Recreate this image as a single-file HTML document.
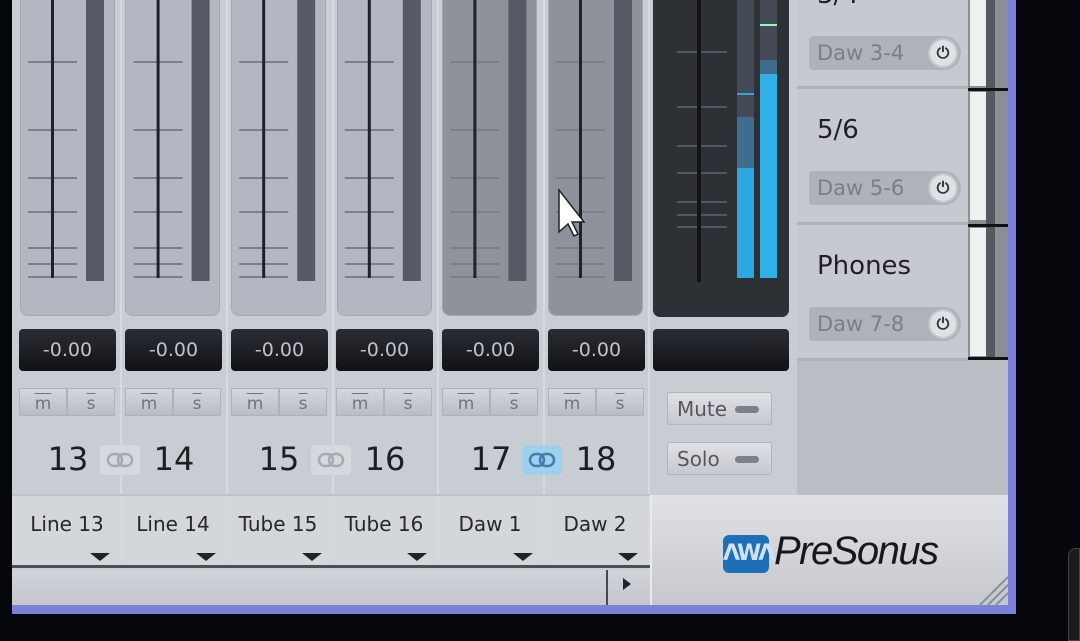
<!DOCTYPE html>
<html><head><meta charset="utf-8"><style>
*{margin:0;padding:0;box-sizing:border-box}
body{width:1080px;height:641px;background:#05070c;position:relative;overflow:hidden;font-family:"DejaVu Sans","Liberation Sans",sans-serif}
.a{position:absolute}
.win{left:12px;top:0;width:1004px;height:614px;background:#c8ccd3;border-right:8px solid #7b80d8;border-bottom:9px solid #7b80d8}
.pan{top:0;width:95px;height:316px;background:#b3b7c1;border-radius:0 0 8px 8px;border:1px solid #a4a8b2;border-top:none}
.pan.d{background:#8d929b}
.vb{top:329px;width:97px;height:42px;background:linear-gradient(#2a2d33,#101216);border-radius:4px;color:#bfc3c9;font-size:19px;text-align:center;line-height:42px}
.ms{top:388px;width:48px;height:28px;background:linear-gradient(#d4d7dc,#b9bdc4);border:1px solid #aeb2b9;color:#70747c;font-size:17px;text-align:center;line-height:30px;text-decoration:overline}
.num{top:440px;font-size:32px;color:#1c1e22;width:60px;text-align:center}
.lk{top:445px;width:40px;height:30px;background:#d5d8dd;border-radius:3px}
.lk svg{position:absolute;left:6px;top:7px}
.nm{top:512px;width:106px;text-align:center;font-size:20px;color:#26282c}
.ar{top:553px;width:0;height:0;border-left:10px solid transparent;border-right:10px solid transparent;border-top:8px solid #222}
.sep{top:0;width:2px;height:565px;background:#d6d9de}
.pw{width:152px;height:34px;background:#aeb2ba;border-radius:4px 17px 17px 4px;color:#7a7e86;font-size:21px;line-height:34px;padding-left:8px}
.pb{width:30px;height:30px;border-radius:50%;background:#dfe1e5;border:2px solid #c2c5cb;color:#333;font-size:16px;text-align:center;line-height:26px;font-weight:bold}
.ot{font-size:26px;color:#1f2125}
.btn{left:667px;width:105px;height:33px;background:linear-gradient(#dfe1e5,#c6c9cf);border:1px solid #b0b4bb;border-radius:3px;font-size:20px;color:#55585e;line-height:32px;padding-left:9px}
.btn i{position:absolute;right:12px;top:13px;width:24px;height:7px;border-radius:4px;background:#7c8088}
</style></head><body>
<div class="a win"></div>
<div class="a" style="left:12px;top:495px;width:638px;height:72px;background:#d3d6db"></div>
<div class="a" style="left:12px;top:565px;width:638px;height:3px;background:#4b4e54"></div>
<div class="a" style="left:12px;top:570px;width:638px;height:35px;background:linear-gradient(#d0d3d8,#c4c7cd)"></div>
<div class="a" style="left:606px;top:570px;width:2px;height:35px;background:#45484e"></div>
<div class="a" style="left:623px;top:578px;width:0;height:0;border-top:6px solid transparent;border-bottom:6px solid transparent;border-left:8px solid #222"></div>

<div class="a sep" style="left:120px"></div><div class="a sep" style="left:226px"></div><div class="a sep" style="left:332px"></div><div class="a sep" style="left:437px"></div><div class="a sep" style="left:543px"></div><div class="a sep" style="left:648px"></div>

<div class="a pan" style="left:20px"></div><div class="a pan" style="left:125px"></div><div class="a pan" style="left:231px"></div><div class="a pan" style="left:337px"></div><div class="a pan d" style="left:442px"></div><div class="a pan d" style="left:548px"></div>

<svg class="a" style="left:0;top:0" width="650" height="300">
<g stroke="#7a7f89" stroke-width="2">
<path id="t" d="M28 62h49M28 130h49M28 178h49M28 212h49M28 248h49M28 264h49M28 277h49"/>
<use href="#t" x="105.6"/><use href="#t" x="211.2"/><use href="#t" x="316.8"/><use href="#t" x="422.4"/><use href="#t" x="528"/>
</g>
<g fill="#1e222a"><rect x="51" y="0" width="3" height="278"/><rect x="156.6" y="0" width="3" height="278"/><rect x="262.2" y="0" width="3" height="278"/><rect x="367.8" y="0" width="3" height="278"/><rect x="473.4" y="0" width="3" height="278"/><rect x="579" y="0" width="3" height="278"/></g>
<g fill="#555a65"><rect x="86" y="0" width="18" height="281"/><rect x="191.6" y="0" width="18" height="281"/><rect x="297.2" y="0" width="18" height="281"/><rect x="402.8" y="0" width="18" height="281"/><rect x="508.4" y="0" width="18" height="281"/><rect x="614" y="0" width="18" height="281"/></g>
<path d="M559 190v42l9-8 6 12 4-2-6-12h12z" fill="#fff" stroke="#222" stroke-width="1.5"/>
</svg>

<div class="a vb" style="left:19px">-0.00</div><div class="a vb" style="left:125px">-0.00</div><div class="a vb" style="left:231px">-0.00</div><div class="a vb" style="left:336px">-0.00</div><div class="a vb" style="left:442px">-0.00</div><div class="a vb" style="left:548px">-0.00</div>

<div class="a ms" style="left:19px">m</div><div class="a ms" style="left:67px">s</div>
<div class="a ms" style="left:125px">m</div><div class="a ms" style="left:173px">s</div>
<div class="a ms" style="left:231px">m</div><div class="a ms" style="left:279px">s</div>
<div class="a ms" style="left:336px">m</div><div class="a ms" style="left:384px">s</div>
<div class="a ms" style="left:442px">m</div><div class="a ms" style="left:490px">s</div>
<div class="a ms" style="left:548px">m</div><div class="a ms" style="left:596px">s</div>

<div class="a" style="left:12px;top:494px;width:638px;height:2px;background:#bfc2c8"></div>
<div class="a num" style="left:38px">13</div><div class="a num" style="left:144px">14</div>
<div class="a num" style="left:249px">15</div><div class="a num" style="left:355px">16</div>
<div class="a num" style="left:461px">17</div><div class="a num" style="left:566px">18</div>
<div class="a lk" style="left:100px"><svg width="28" height="16"><g fill="none" stroke="#a6aab0" stroke-width="2.5"><rect x="2" y="2" width="14" height="12" rx="6"/><rect x="12" y="2" width="14" height="12" rx="6"/></g></svg></div>
<div class="a lk" style="left:311px"><svg width="28" height="16"><g fill="none" stroke="#a6aab0" stroke-width="2.5"><rect x="2" y="2" width="14" height="12" rx="6"/><rect x="12" y="2" width="14" height="12" rx="6"/></g></svg></div>
<div class="a lk" style="left:522px;background:#9fd1ec"><svg width="28" height="16"><g fill="none" stroke="#3f7fae" stroke-width="2.5"><rect x="2" y="2" width="14" height="12" rx="6"/><rect x="12" y="2" width="14" height="12" rx="6"/></g></svg></div>

<div class="a nm" style="left:14px">Line 13</div><div class="a nm" style="left:120px">Line 14</div><div class="a nm" style="left:225px">Tube 15</div><div class="a nm" style="left:331px">Tube 16</div><div class="a nm" style="left:437px">Daw 1</div><div class="a nm" style="left:542px">Daw 2</div>
<div class="a ar" style="left:90px"></div><div class="a ar" style="left:196px"></div><div class="a ar" style="left:302px"></div><div class="a ar" style="left:407px"></div><div class="a ar" style="left:513px"></div><div class="a ar" style="left:618px"></div>

<div class="a" style="left:653px;top:0;width:136px;height:317px;background:#2d3035;border-radius:0 0 7px 7px"></div>
<svg class="a" style="left:653px;top:0" width="136" height="300">
<g stroke="#545861" stroke-width="2"><path d="M24 52h50M24 107h50M24 146h50M24 173h50M24 202h50M24 215h50M24 227h50"/></g>
<rect x="44" y="0" width="4" height="282" fill="#111317"/>
<rect x="84" y="0" width="17" height="278" fill="#444a55"/><rect x="107" y="0" width="17" height="278" fill="#444a55"/>
<rect x="84" y="117" width="17" height="160" fill="#3f6d8e"/><rect x="84" y="168" width="17" height="110" fill="#2da7df"/>
<rect x="107" y="60" width="17" height="218" fill="#3f6d8e"/><rect x="107" y="74" width="17" height="204" fill="#2fb0e6"/>
<rect x="107" y="24" width="17" height="2" fill="#8fb"/>
<rect x="84" y="93" width="17" height="2" fill="#2da7df"/>
</svg>
<div class="a vb" style="left:653px;width:136px"></div>
<div class="a btn" style="top:392px">Mute<i></i></div>
<div class="a btn" style="top:442px">Solo<i></i></div>

<div class="a" style="left:797px;top:0;width:211px;height:495px;background:#b9bdc4"></div>
<div class="a" style="left:797px;top:0;width:171px;height:360px;background:#c6c9cf"></div>
<div class="a ot" style="left:817px;top:-20px">3/4</div>
<div class="a" style="left:797px;top:86px;width:171px;height:3px;background:#aeb2b9"></div>
<div class="a" style="left:797px;top:222px;width:171px;height:3px;background:#aeb2b9"></div>
<div class="a" style="left:797px;top:358px;width:171px;height:3px;background:#aeb2b9"></div>
<div class="a" style="left:968px;top:0;width:40px;height:360px;background:#8a8e95"></div>
<div class="a" style="left:986px;top:0;width:9px;height:360px;background:#55595f"></div>
<div class="a" style="left:970px;top:0;width:16px;height:86px;background:#eef0f2"></div>
<div class="a" style="left:970px;top:92px;width:16px;height:128px;background:#eef0f2"></div>
<div class="a" style="left:970px;top:228px;width:16px;height:128px;background:#eef0f2"></div>
<div class="a" style="left:968px;top:88px;width:40px;height:3px;background:#111"></div>
<div class="a" style="left:968px;top:224px;width:40px;height:3px;background:#111"></div>
<div class="a" style="left:968px;top:357px;width:40px;height:3px;background:#111"></div>
<div class="a pw" style="left:809px;top:36px">Daw 3-4</div><div class="a pb" style="left:928px;top:38px">⏻</div>
<div class="a ot" style="left:817px;top:115px">5/6</div>
<div class="a pw" style="left:809px;top:171px">Daw 5-6</div><div class="a pb" style="left:928px;top:173px">⏻</div>
<div class="a ot" style="left:817px;top:251px">Phones</div>
<div class="a pw" style="left:809px;top:307px">Daw 7-8</div><div class="a pb" style="left:928px;top:309px">⏻</div>

<div class="a" style="left:650px;top:495px;width:358px;height:110px;background:linear-gradient(#dfe1e4,#c5c8cd);border-left:2px solid #e8eaec"></div>
<div class="a" style="left:723px;top:535px;width:46px;height:38px;background:#1f6fb7;border-radius:6px;color:#cfe3f5;font-size:22px;font-weight:bold;line-height:38px;text-align:center;letter-spacing:-3px">ΛWΛ</div>
<div class="a" style="left:774px;top:529px;font-family:'Liberation Sans',sans-serif;font-style:italic;font-size:40px;color:#16181b;letter-spacing:-1.5px">PreSonus</div>
<svg class="a" style="left:978px;top:575px" width="30" height="30"><g stroke="#8a8e95" stroke-width="2"><path d="M2 30L30 2M10 30L30 10M18 30L30 18"/></g></svg>
<div class="a" style="left:1068px;top:548px;width:12px;height:93px;background:#1a1c20;border-radius:8px 0 0 0;border:1px solid #444"></div>
</body></html>
